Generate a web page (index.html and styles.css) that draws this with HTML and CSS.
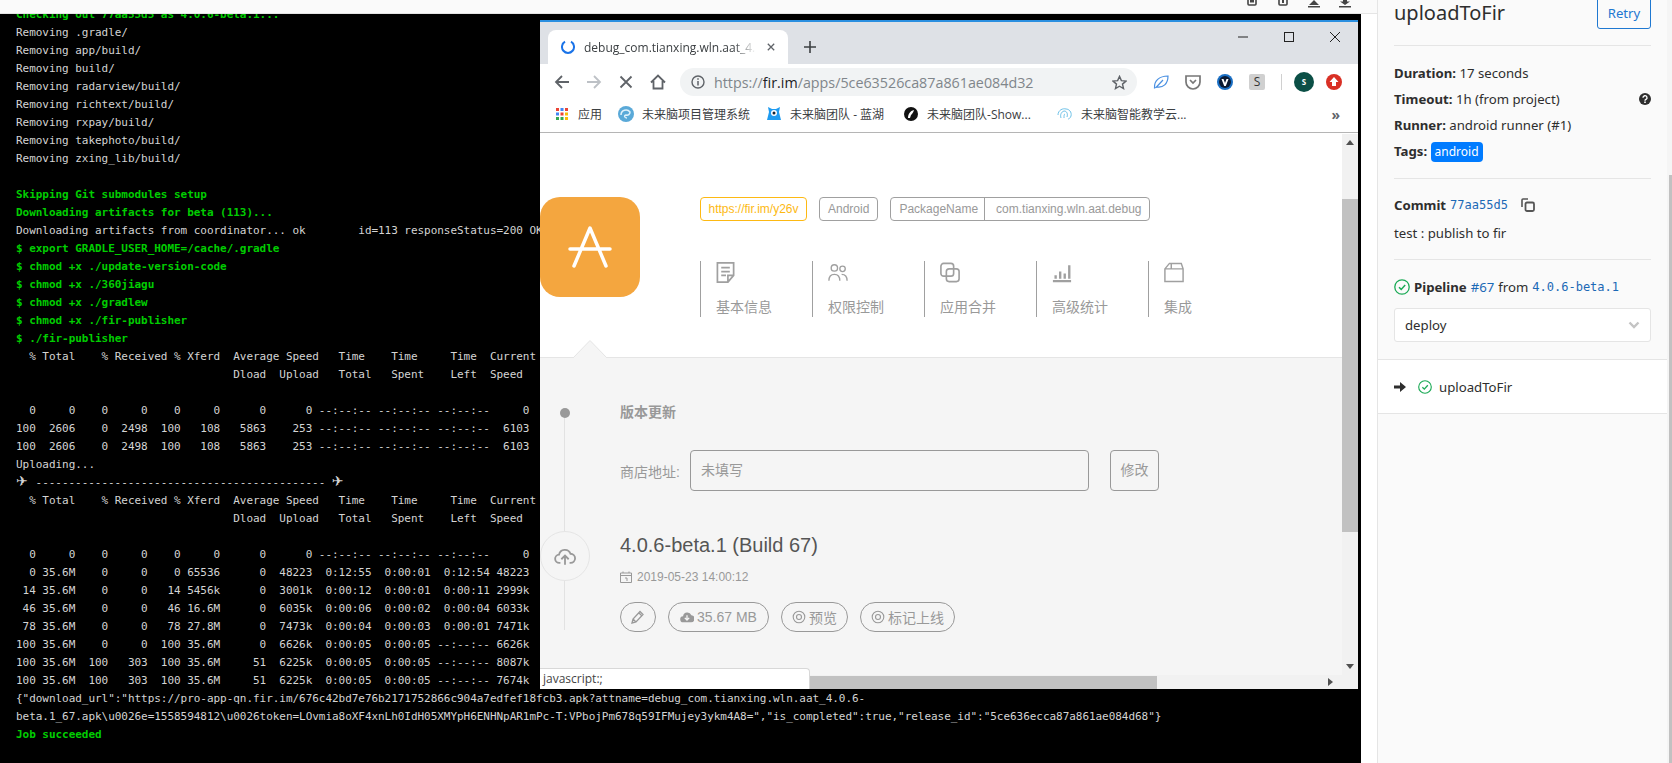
FILE: index.html
```html
<!DOCTYPE html>
<html lang="en">
<head>
  <meta charset="UTF-8">
  <meta name="viewport" content="width=device-width, initial-scale=1.0">
  <title>uploadToFir</title>
  <link rel="stylesheet" href="styles.css">
</head>
<body>
  <div class="main">
    <div class="job-bar">
      <svg class="bar-icon" viewBox="0 0 12 8"><path d="M2 0v4a1 1 0 0 0 1 1h6a1 1 0 0 0 1-1V0" fill="none" stroke="#444" stroke-width="1.6"/><rect x="4" y="0" width="4" height="2.5" fill="#444"/></svg>
      <svg class="bar-icon" viewBox="0 0 12 8"><path d="M2 0v4a1 1 0 0 0 1 1h6a1 1 0 0 0 1-1V0" fill="none" stroke="#444" stroke-width="1.6"/><rect x="5" y="0" width="2" height="3" fill="#444"/></svg>
      <svg class="bar-icon" viewBox="0 0 12 8"><path d="M6 0l5 5H1zM0 6h12v1.4H0z" fill="#444"/></svg>
      <svg class="bar-icon" viewBox="0 0 12 8"><path d="M4 0h4v1.5h3L6 5 1 1.500h3zM0 6h12v1.400H0z" fill="#444"/></svg>
    </div>
    <div class="terminal">
<pre class="log"><span class="g">Checking out 77aa55d5 as 4.0.6-beta.1...</span>
Removing .gradle/
Removing app/build/
Removing build/
Removing radarview/build/
Removing richtext/build/
Removing rxpay/build/
Removing takephoto/build/
Removing zxing_lib/build/

<span class="g">Skipping Git submodules setup</span>
<span class="g">Downloading artifacts for beta (113)...</span>
Downloading artifacts from coordinator... ok        id=113 responseStatus=200 OK
<span class="g">$ export GRADLE_USER_HOME=/cache/.gradle</span>
<span class="g">$ chmod +x ./update-version-code</span>
<span class="g">$ chmod +x ./360jiagu</span>
<span class="g">$ chmod +x ./gradlew</span>
<span class="g">$ chmod +x ./fir-publisher</span>
<span class="g">$ ./fir-publisher</span>
  % Total    % Received % Xferd  Average Speed   Time    Time     Time  Current
                                 Dload  Upload   Total   Spent    Left  Speed

  0     0    0     0    0     0      0      0 --:--:-- --:--:-- --:--:--     0
100  2606    0  2498  100   108   5863    253 --:--:-- --:--:-- --:--:--  6103
100  2606    0  2498  100   108   5863    253 --:--:-- --:--:-- --:--:--  6103
Uploading...
<span class="plane">✈</span> -------------------------------------------- <span class="plane">✈</span>
  % Total    % Received % Xferd  Average Speed   Time    Time     Time  Current
                                 Dload  Upload   Total   Spent    Left  Speed

  0     0    0     0    0     0      0      0 --:--:-- --:--:-- --:--:--     0
  0 35.6M    0     0    0 65536      0  48223  0:12:55  0:00:01  0:12:54 48223
 14 35.6M    0     0   14 5456k      0  3001k  0:00:12  0:00:01  0:00:11 2999k
 46 35.6M    0     0   46 16.6M      0  6035k  0:00:06  0:00:02  0:00:04 6033k
 78 35.6M    0     0   78 27.8M      0  7473k  0:00:04  0:00:03  0:00:01 7471k
100 35.6M    0     0  100 35.6M      0  6626k  0:00:05  0:00:05 --:--:-- 6626k
100 35.6M  100   303  100 35.6M     51  6225k  0:00:05  0:00:05 --:--:-- 8087k
100 35.6M  100   303  100 35.6M     51  6225k  0:00:05  0:00:05 --:--:-- 7674k
{"download_url":"https://pro-app-qn.fir.im/676c42bd7e76b2171752866c904a7edfef18fcb3.apk?attname=debug_com.tianxing.wln.aat_4.0.6-
beta.1_67.apk\u0026e=1558594812\u0026token=LOvmia8oXF4xnLh0IdH05XMYpH6ENHNpAR1mPc-T:VPbojPm678q59IFMujey3ykm4A8=","is_completed":true,"release_id":"5ce636ecca87a861ae084d68"}
<span class="g">Job succeeded</span></pre>
    </div>
  </div>

  <aside class="sidebar">
    <div class="side-scroll">
      <div class="side-body">
        <div class="side-head">
          <h2 class="job-name">uploadToFir</h2>
          <a class="retry">Retry</a>
        </div>
        <div class="side-block">
          <p class="info"><b>Duration:</b> 17 seconds</p>
          <p class="info info-help"><span><b>Timeout:</b> 1h (from project)</span>
            <svg class="help" viewBox="0 0 12 12"><circle cx="6" cy="6" r="6" fill="#2e2e2e"/><path d="M4 4.700a2 2 0 1 1 3 1.700c-.7.400-1 .7-1 1.300" fill="none" stroke="#fff" stroke-width="1.400"/><rect x="5.200" y="8.500" width="1.600" height="1.500" fill="#fff"/></svg>
          </p>
          <p class="info"><b>Runner:</b> android runner (#1)</p>
          <p class="info"><b>Tags:</b> <span class="tag">android</span></p>
        </div>
        <div class="side-block commit-block">
          <p class="commit"><b>Commit</b> <code class="sha">77aa55d5</code>
            <svg class="copy" viewBox="0 0 14 14"><path d="M1 9V2a1 1 0 0 1 1-1h5" fill="none" stroke="#555" stroke-width="1.600"/><rect x="4.500" y="4.500" width="8.500" height="8.500" rx="1.500" fill="none" stroke="#555" stroke-width="1.800"/></svg>
          </p>
          <p class="commit-msg">test : publish to fir</p>
        </div>
        <div class="pipeline-block">
          <p class="pipeline">
            <svg class="ok ok-big" viewBox="0 0 16 16"><circle cx="8" cy="8" r="7.200" fill="none" stroke="#1aaa55" stroke-width="1.300"/><path d="M5 8.300l2.200 2.100L11.200 6" fill="none" stroke="#1aaa55" stroke-width="1.500"/></svg>
            <b>Pipeline</b> <a class="link">#67</a> from <code class="sha">4.0.6-beta.1</code>
          </p>
          <div class="stage-select">deploy
            <svg class="caret" viewBox="0 0 12 8"><path d="M1.500 1.500L6 6l4.500-4.500" fill="none" stroke="#c4c4c4" stroke-width="2.400"/></svg>
          </div>
        </div>
      </div>
      <div class="job-row">
        <svg class="row-arrow" viewBox="0 0 12 10"><path d="M0 3.500h6V0l6 5-6 5V6.500H0z" fill="#2e2e2e"/></svg>
        <svg class="ok" viewBox="0 0 16 16"><circle cx="8" cy="8" r="7.200" fill="none" stroke="#1aaa55" stroke-width="1.300"/><path d="M5 8.300l2.200 2.100L11.200 6" fill="none" stroke="#1aaa55" stroke-width="1.500"/></svg>
        <span>uploadToFir</span>
      </div>
    </div>
    <div class="side-track"><div class="side-thumb"></div></div>
  </aside>

  <div class="window">
    <div class="tabstrip">
      <div class="tab">
        <svg class="spinner" viewBox="0 0 14 14"><path d="M4 1.700A6 6 0 1 0 10 1.700" fill="none" stroke="#1a73e8" stroke-width="2"/></svg>
        <span class="tab-title">debug_com.tianxing.wln.aat_4.</span>
        <svg class="tab-close" viewBox="0 0 10 10"><path d="M1 1l8 8M9 1l-8 8" stroke="#5f6368" stroke-width="1.600"/></svg>
      </div>
      <svg class="new-tab" viewBox="0 0 12 12"><path d="M6 0v12M0 6h12" stroke="#3c4043" stroke-width="1.600"/></svg>
      <div class="win-btns">
        <svg viewBox="0 0 12 12"><path d="M1 6h10" stroke="#222" stroke-width="1"/></svg>
        <svg viewBox="0 0 12 12"><rect x="1.500" y="1.500" width="9" height="9" fill="none" stroke="#222" stroke-width="1"/></svg>
        <svg viewBox="0 0 12 12"><path d="M1 1l10 10M11 1L1 11" stroke="#222" stroke-width="1"/></svg>
      </div>
    </div>

    <div class="toolbar">
      <svg class="nav-icon" viewBox="0 0 16 16"><path d="M15 8H2M8 2L2 8l6 6" fill="none" stroke="#5f6368" stroke-width="1.800"/></svg>
      <svg class="nav-icon" viewBox="0 0 16 16"><path d="M1 8h13M8 2l6 6-6 6" fill="none" stroke="#bdc1c6" stroke-width="1.800"/></svg>
      <svg class="nav-icon" viewBox="0 0 16 16"><path d="M2.500 2.500l11 11M13.500 2.500l-11 11" fill="none" stroke="#5f6368" stroke-width="1.800"/></svg>
      <svg class="nav-icon" viewBox="0 0 16 16"><path d="M1 8.500L8 1.500l7 7M3.500 7v7.500h9V7" fill="none" stroke="#5f6368" stroke-width="1.800"/></svg>
      <div class="omnibox">
        <svg class="omni-info" viewBox="0 0 14 14"><circle cx="7" cy="7" r="6" fill="none" stroke="#5f6368" stroke-width="1.400"/><path d="M7 6v4.500M7 3.300v1.500" stroke="#5f6368" stroke-width="1.500"/></svg>
        <span class="url">https://<em>fir.im</em>/apps/5ce63526ca87a861ae084d32</span>
        <svg class="omni-star" viewBox="0 0 16 16"><path d="M8 1.500l2 4.500 4.900.5-3.700 3.200 1.100 4.800L8 12l-4.300 2.500 1.100-4.800L1.100 6.500 6 6z" fill="none" stroke="#5f6368" stroke-width="1.500"/></svg>
      </div>
      <div class="ext-icons">
        <svg class="ext" viewBox="0 0 16 16"><path d="M1.500 14C1 7 6 2 15 2c0 8-5 12-11 11zM3 13.500L10 6" fill="none" stroke="#4a90e2" stroke-width="1.200"/></svg>
        <svg class="ext" viewBox="0 0 16 16"><path d="M1 2h14v6a7 7 0 0 1-14 0z" fill="none" stroke="#777" stroke-width="1.700"/><path d="M5 6l3 3 3-3" fill="none" stroke="#777" stroke-width="1.700"/></svg>
        <svg class="ext" viewBox="0 0 16 16"><circle cx="8" cy="8" r="8" fill="#1a6fc4"/><circle cx="8" cy="8" r="6" fill="#0a1a33"/><path d="M4.500 5h2L8 9l1.500-4h2L8.800 12H7.200z" fill="#fff"/></svg>
        <span class="ext-s">S</span>
        <span class="ext-sep"></span>
        <span class="avatar">S</span>
        <svg class="ext-red" viewBox="0 0 16 16"><circle cx="8" cy="8" r="8" fill="#d93025"/><path d="M8 3l4.500 5H10v4H6V8H3.500z" fill="#fff"/></svg>
      </div>
    </div>

    <div class="bookmarks">
      <svg class="apps" viewBox="0 0 12 12"><rect width="3" height="3" fill="#ea4335"/><rect x="4.500" width="3" height="3" fill="#4285f4"/><rect x="9" width="3" height="3" fill="#ea4335"/><rect y="4.500" width="3" height="3" fill="#4285f4"/><rect x="4.500" y="4.500" width="3" height="3" fill="#ea4335"/><rect x="9" y="4.500" width="3" height="3" fill="#fbbc05"/><rect y="9" width="3" height="3" fill="#34a853"/><rect x="4.500" y="9" width="3" height="3" fill="#34a853"/><rect x="9" y="9" width="3" height="3" fill="#fbbc05"/></svg>
      <span class="bm bm-apps">应用</span>
      <svg class="fav" viewBox="0 0 16 16"><circle cx="8" cy="8" r="8" fill="#5aa9d8"/><path d="M3 9a5 5 0 0 1 9-3 3 3 0 0 1-4 3c-2 0-2 3 1 3" fill="none" stroke="#dff1fb" stroke-width="1.500"/></svg>
      <span class="bm bm-a">未来脑项目管理系统</span>
      <svg class="fav" viewBox="0 0 16 16"><path d="M3 6l-1-5 4 2h4l4-2-1 5 2 8H1z" fill="#1e9bf0"/><circle cx="8" cy="7" r="3" fill="#fff"/><circle cx="8" cy="7" r="1.500" fill="#123"/></svg>
      <span class="bm bm-b">未来脑团队 - 蓝湖</span>
      <svg class="fav" viewBox="0 0 16 16"><circle cx="8" cy="8" r="7" fill="#111"/><path d="M5 12c0-4 2-7 6-8-1 3-2 4-3 5l-1 3z" fill="#fff"/></svg>
      <span class="bm bm-c">未来脑团队-Show...</span>
      <svg class="fav" viewBox="0 0 16 16"><path d="M1 9c0-5 5-7 8-6 3 0 6 3 5 7-1 3-3 3-3 3M4 12c-1-3 0-6 3-7 3 0 4 3 3 6M7 12c0-2 0-4 1-4" fill="none" stroke="#6fc2e8" stroke-width="1"/></svg>
      <span class="bm bm-d">未来脑智能教学云...</span>
      <span class="bm-more">»</span>
    </div>

    <div class="viewport">
      <div class="page-row">
        <div class="page">
          <div class="app-head">
            <div class="app-icon">
              <svg viewBox="0 0 100 100"><path d="M34 69L50 31l16 38M30 52h40" fill="none" stroke="#fff" stroke-width="3.500" stroke-linecap="round" stroke-linejoin="round"/></svg>
            </div>
            <div class="app-meta">
              <div class="badges">
                <span class="badge badge-link">https://fir.im/y26v</span>
                <span class="badge">Android</span>
                <span class="badge badge-pack"><span class="pack-k">PackageName</span><span class="pack-v">com.tianxing.wln.aat.debug</span></span>
              </div>
              <div class="app-nav">
                <div class="nav-item">
                  <svg viewBox="0 0 20 22"><path d="M1 1h17v13l-6 7H1zM5 6h9M5 10h9M5 14h5M12 21v-7h6" fill="none" stroke="#a0a0a0" stroke-width="1.800"/></svg>
                  <span>基本信息</span>
                </div>
                <div class="nav-item">
                  <svg viewBox="0 0 22 22"><circle cx="7" cy="6" r="3.500" fill="none" stroke="#a0a0a0" stroke-width="1.500"/><circle cx="16" cy="7" r="3" fill="none" stroke="#a0a0a0" stroke-width="1.500"/><path d="M1 20c0-5 3-7 6-7s6 2 6 7M15 13c3 0 6 2 6 7" fill="none" stroke="#a0a0a0" stroke-width="1.500"/></svg>
                  <span>权限控制</span>
                </div>
                <div class="nav-item">
                  <svg viewBox="0 0 22 22"><rect x="1" y="1" width="14" height="14" rx="3" fill="none" stroke="#a0a0a0" stroke-width="1.800"/><rect x="7" y="7" width="14" height="14" rx="3" fill="none" stroke="#a0a0a0" stroke-width="1.800"/></svg>
                  <span>应用合并</span>
                </div>
                <div class="nav-item">
                  <svg viewBox="0 0 22 22"><path d="M1 20.500h20M4 18v-4M9 18v-8M14 18v-6M19 18V3" fill="none" stroke="#a0a0a0" stroke-width="2.600"/></svg>
                  <span>高级统计</span>
                </div>
                <div class="nav-item">
                  <svg viewBox="0 0 22 22"><path d="M1 7l5-6h13l2 6v14H1zM1 7h20M8 1v6" fill="none" stroke="#a0a0a0" stroke-width="1.600"/></svg>
                  <span>集成</span>
                </div>
              </div>
            </div>
            <svg class="notch" viewBox="0 0 34 18"><path d="M0 18L17 .5 34 18" fill="#f5f5f5" stroke="#e5e5e5"/></svg>
          </div>

          <div class="releases">
            <div class="timeline">
              <span class="tl-dot"></span>
              <span class="tl-circle">
                <svg viewBox="0 0 24 20"><path d="M7 17H6a4.500 4.500 0 0 1-.5-9 6.500 6.500 0 0 1 12.500-1 5 5 0 0 1 0 10h-1M12 19v-9M8 13l4-4 4 4" fill="none" stroke="#999" stroke-width="2"/></svg>
              </span>
            </div>
            <div class="rel-body">
              <h4 class="rel-title">版本更新</h4>
              <div class="store">
                <label class="store-label">商店地址:</label>
                <div class="store-input">未填写</div>
                <div class="store-btn">修改</div>
              </div>
              <h3 class="version">4.0.6-beta.1 (Build 67)</h3>
              <p class="rel-date">
                <svg viewBox="0 0 12 12"><path d="M.5 2h11v9.500H.5zM.5 4.500h11M3 .5V2M9 .5V2M5 7h2v3" fill="none" stroke="#999" stroke-width="1"/></svg>
                2019-05-23 14:00:12
              </p>
              <div class="pills">
                <span class="pill pill-edit"><svg viewBox="0 0 14 14"><path d="M1 13l1-4 7-7.500 3 3L5 12zM2 9l3 3M8 3l3 3" fill="none" stroke="#999" stroke-width="1.300"/></svg></span>
                <span class="pill pill-size"><svg viewBox="0 0 16 14"><path d="M4 13a3.500 3.500 0 0 1-.5-7A5 5 0 0 1 13 5a4 4 0 0 1-1 8z" fill="#999"/><path d="M8 5v5M5.500 8L8 10.500 10.500 8" fill="none" stroke="#f5f5f5" stroke-width="1.500"/></svg>35.67 MB</span>
                <span class="pill pill-view"><svg viewBox="0 0 14 14"><circle cx="7" cy="7" r="5.800" fill="none" stroke="#999" stroke-width="1.100"/><circle cx="7" cy="7" r="2.500" fill="none" stroke="#999" stroke-width="1.100"/></svg>预览</span>
                <span class="pill pill-mark"><svg viewBox="0 0 14 14"><circle cx="7" cy="7" r="5.800" fill="none" stroke="#999" stroke-width="1.100"/><circle cx="7" cy="7" r="2.500" fill="none" stroke="#999" stroke-width="1.100"/></svg>标记上线</span>
              </div>
            </div>
          </div>
        </div>
        <div class="v-scroll">
          <svg class="sb-arrow" viewBox="0 0 8 5"><path d="M4 0l4 5H0z" fill="#505050"/></svg>
          <div class="v-track"><div class="v-thumb"></div></div>
          <svg class="sb-arrow" viewBox="0 0 8 5"><path d="M4 5L8 0H0z" fill="#505050"/></svg>
        </div>
      </div>
      <div class="h-scroll">
        <div class="h-track"><div class="h-thumb"></div></div>
        <svg class="sb-arrow-r" viewBox="0 0 5 8"><path d="M5 4L0 0v8z" fill="#505050"/></svg>
      </div>
      <div class="status-bubble">javascript:;</div>
    </div>
  </div>
</body>
</html>
```

FILE: styles.css
```css
html, body {
  height: 100%;
  margin: 0;
}
body {
  display: flex;
  overflow: hidden;
  background: #fff;
  font-family: "Liberation Sans", "Noto Sans CJK SC", sans-serif;
}
p, h2, h3, h4 {
  margin: 0;
  font-weight: normal;
}

/* job log */
.main {
  width: 1377px;
  display: flex;
  flex-direction: column;
  flex-shrink: 0;
}
.job-bar {
  height: 13px;
  background: #fafafa;
  border-bottom: 1px solid #e5e5e5;
  display: flex;
  justify-content: flex-end;
  align-items: flex-start;
  gap: 19px;
  padding-right: 26px;
  box-sizing: content-box;
}
.bar-icon {
  width: 12px;
  height: 8px;
}
.terminal {
  flex: 1;
  margin-right: 16px;
  background: #000;
  overflow: hidden;
}
.log {
  margin: -8px 0 0;
  padding: 0 0 0 16px;
  font-family: "DejaVu Sans Mono", monospace;
  font-size: 11px;
  letter-spacing: -0.04px;
  line-height: 18px;
  color: #d4d4d4;
}
.g {
  color: #00cd00;
  font-weight: bold;
}
.plane {
  display: inline-block;
  width: 13px;
  font-family: "DejaVu Sans", sans-serif;
  font-size: 14px;
  line-height: 0;
}

/* right sidebar */
.sidebar {
  flex: 1;
  display: flex;
  min-width: 0;
  background: #fafafa;
  border-left: 1px solid #e5e5e5;
  font-family: "Noto Sans", sans-serif;
  font-size: 13.200px;
  color: #2e2e2e;
  overflow: hidden;
}
.side-scroll {
  flex: 1;
  min-width: 0;
}
.side-body {
  padding: 0 16px;
}
.side-track {
  width: 3px;
  padding-left: 2px;
  background: #f5f5f5;
  padding-top: 175px;
}
.side-thumb {
  height: 588px;
  background: #c1c1c1;
}
.side-head {
  display: flex;
  justify-content: space-between;
  align-items: flex-end;
  height: 46px;
  padding-bottom: 18px;
  box-sizing: border-box;
  border-bottom: 1px solid #e5e5e5;
}
.job-name {
  font-size: 20px;
  line-height: 29px;
}
.retry {
  align-self: flex-start;
  margin-top: -7px;
  width: 54px;
  height: 36px;
  box-sizing: border-box;
  border: 1px solid #1f78d1;
  border-radius: 3px;
  color: #1f78d1;
  text-align: center;
  padding-top: 10px;
}
.side-block {
  padding: 14px 0;
  border-bottom: 1px solid #e5e5e5;
}
.info {
  line-height: 26px;
}
.info-help {
  display: flex;
  justify-content: space-between;
  align-items: center;
}
.help {
  width: 12px;
  height: 12px;
}
.tag {
  display: inline-block;
  background: #007bff;
  color: #fff;
  border-radius: 4px;
  padding: 0 4px;
  font-size: 12px;
  line-height: 20px;
}
.commit-block {
  padding: 13px 0;
}
.commit {
  line-height: 26px;
  display: flex;
  align-items: center;
  gap: 4px;
}
.sha {
  font-family: "DejaVu Sans Mono", monospace;
  font-size: 12px;
  color: #1b69b6;
}
.copy {
  width: 14px;
  height: 14px;
  margin-left: 9px;
}
.commit-msg {
  line-height: 26px;
  padding-top: 2px;
}
.pipeline-block {
  padding: 14px 0 17px;
}
.pipeline {
  display: flex;
  align-items: center;
  gap: 4px;
  line-height: 26px;
}
.link {
  color: #1b69b6;
}
.ok {
  width: 14px;
  height: 14px;
  flex-shrink: 0;
}
.ok-big {
  width: 16px;
  height: 16px;
}
.stage-select {
  margin-top: 8px;
  height: 34px;
  box-sizing: border-box;
  padding: 0 10px;
  display: flex;
  justify-content: space-between;
  align-items: center;
  background: #fff;
  border: 1px solid #e5e5e5;
  border-radius: 3px;
}
.caret {
  width: 12px;
  height: 8px;
}
.job-row {
  height: 55px;
  box-sizing: border-box;
  display: flex;
  align-items: center;
  padding-left: 16px;
  background: #fff;
  border-top: 1px solid #e5e5e5;
  border-bottom: 1px solid #e5e5e5;
}
.row-arrow {
  width: 12px;
  height: 10px;
  margin-right: 12px;
}
.job-row .ok {
  margin-right: 7px;
}

/* browser window on top of the log */
.window {
  position: absolute;
  left: 540px;
  top: 20px;
  width: 818px;
  height: 669px;
  display: flex;
  flex-direction: column;
  background: #fff;
  border-top: 2px solid #2b8fe0;
  box-sizing: border-box;
  font-family: "Open Sans", "Noto Sans CJK SC", sans-serif;
}
.tabstrip {
  height: 42px;
  flex-shrink: 0;
  background: #dee1e6;
  display: flex;
  align-items: flex-end;
  padding-left: 8px;
}
.tab {
  width: 240px;
  height: 34px;
  box-sizing: border-box;
  background: #fff;
  border-radius: 8px 8px 0 0;
  display: flex;
  align-items: center;
  padding: 0 0 0 13px;
}
.spinner {
  width: 14px;
  height: 14px;
  margin-right: 9px;
}
.tab-title {
  font-size: 12px;
  color: #3c4043;
  width: 172px;
  white-space: nowrap;
  overflow: hidden;
  mask-image: linear-gradient(to right, #000 150px, transparent 172px);
}
.tab-close {
  width: 8px;
  height: 8px;
  margin-left: 11px;
}
.new-tab {
  width: 12px;
  height: 12px;
  margin: 0 0 11px 16px;
}
.win-btns {
  margin-left: auto;
  align-self: flex-start;
  display: flex;
  gap: 34px;
  padding: 9px 17px 0 0;
}
.win-btns svg {
  width: 12px;
  height: 12px;
}
.toolbar {
  height: 36px;
  flex-shrink: 0;
  display: flex;
  align-items: center;
  padding-left: 14px;
  gap: 16px;
}
.nav-icon {
  width: 16px;
  height: 16px;
}
.omnibox {
  width: 457px;
  height: 28px;
  margin-left: -2px;
  border-radius: 14px;
  background: #f1f3f4;
  display: flex;
  align-items: center;
  padding: 0 10px 0 11px;
  box-sizing: border-box;
}
.omni-info {
  width: 14px;
  height: 14px;
  margin-right: 9px;
}
.url {
  font-size: 14.300px;
  color: #80868b;
  flex: 1;
  white-space: nowrap;
}
.url em {
  font-style: normal;
  color: #202124;
}
.omni-star {
  width: 15px;
  height: 15px;
}
.ext-icons {
  display: flex;
  align-items: center;
}
.ext {
  width: 16px;
  height: 16px;
  margin-right: 16px;
}
.ext-s {
  width: 16px;
  height: 16px;
  margin-right: 16px;
  border-radius: 2px;
  background: #d0d0d0;
  color: #333;
  font-size: 12px;
  line-height: 16px;
  text-align: center;
}
.ext-sep {
  width: 1px;
  height: 16px;
  background: #d0d0d0;
  margin-right: 12px;
}
.avatar {
  width: 20px;
  height: 20px;
  border-radius: 50%;
  background: #0b4f46;
  color: #fff;
  font-size: 8px;
  line-height: 20px;
  text-align: center;
  font-weight: bold;
  margin-right: 12px;
}
.ext-red {
  width: 16px;
  height: 16px;
}
.bookmarks {
  height: 33px;
  flex-shrink: 0;
  box-sizing: border-box;
  display: flex;
  align-items: center;
  padding: 0 18px 4px 16px;
  border-bottom: 1px solid #b5b5b5;
  font-size: 12px;
  color: #3c4043;
}
.apps {
  width: 12px;
  height: 12px;
  margin-right: 10px;
}
.fav {
  width: 16px;
  height: 16px;
  margin-right: 8px;
}
.bm {
  white-space: nowrap;
}
.bm-apps {
  margin-right: 16px;
}
.bm-a {
  width: 124px;
}
.bm-b {
  width: 113px;
}
.bm-c {
  width: 130px;
}
.bm-d {
  width: 106px;
}
.bm-more {
  margin-left: auto;
  font-size: 14px;
  font-weight: bold;
  color: #5f6368;
}

/* page inside the browser */
.viewport {
  flex: 1;
  min-height: 0;
  position: relative;
  display: flex;
  flex-direction: column;
  font-family: "Liberation Sans", "Noto Sans CJK SC", sans-serif;
  margin-top: 1px;
}
.page-row {
  flex: 1;
  min-height: 0;
  display: flex;
}
.page {
  flex: 1;
  min-width: 0;
  overflow: hidden;
  background: #f5f5f5;
}
.app-head {
  position: relative;
  height: 224px;
  box-sizing: border-box;
  display: flex;
  background: #fff;
  border-bottom: 1px solid #e5e5e5;
  padding-top: 63px;
}
.app-icon {
  width: 100px;
  height: 100px;
  border-radius: 20px;
  background: #f4a63f;
  margin-right: 60px;
}
.app-icon svg {
  display: block;
}
.badges {
  display: flex;
  gap: 12px;
  font-size: 12px;
}
.badge {
  height: 24px;
  box-sizing: border-box;
  border: 1px solid #a0a0a0;
  border-radius: 4px;
  padding: 0 8px;
  line-height: 22px;
  color: #999;
}
.badge-link {
  width: 107px;
  border-color: #fdb913;
  color: #fdb913;
  text-align: center;
  padding: 0;
}
.badge-pack {
  display: flex;
  padding: 0;
}
.pack-k {
  padding: 0 6px 0 8px;
  border-right: 1px solid #a0a0a0;
}
.pack-v {
  padding: 0 7px 0 11px;
}
.app-nav {
  display: flex;
  margin-top: 40px;
}
.nav-item {
  width: 112px;
  height: 56px;
  box-sizing: border-box;
  flex-shrink: 0;
  border-left: 1px solid #a0a0a0;
  padding-left: 15px;
  display: flex;
  flex-direction: column;
  justify-content: space-between;
  font-size: 14px;
  color: #999;
}
.nav-item svg {
  width: 20px;
  height: 21px;
  margin-top: 1px;
}
.nav-item span {
  line-height: 20px;
}
.notch {
  position: absolute;
  left: 33px;
  bottom: -1px;
  width: 34px;
  height: 18px;
}
.releases {
  display: flex;
  padding-top: 45px;
}
.timeline {
  position: relative;
  width: 80px;
  height: 227px;
  flex-shrink: 0;
}
.timeline::before {
  content: "";
  position: absolute;
  left: 24px;
  top: 10px;
  bottom: 0;
  width: 1px;
  background: #e2e2e2;
}
.tl-dot {
  position: absolute;
  left: 20px;
  top: 5px;
  width: 10px;
  height: 10px;
  border-radius: 50%;
  background: #999;
}
.tl-circle {
  position: absolute;
  left: 0;
  top: 128px;
  width: 48px;
  height: 48px;
  border: 1px solid #e5e5e5;
  border-radius: 50%;
  background: #f5f5f5;
  display: flex;
  align-items: center;
  justify-content: center;
}
.tl-circle svg {
  width: 22px;
  height: 19px;
}
.rel-title {
  margin-top: -1px;
  font-size: 14px;
  font-weight: bold;
  color: #999;
  line-height: 20px;
}
.store {
  display: flex;
  align-items: center;
  margin-top: 28px;
  font-size: 14px;
  color: #999;
}
.store-label {
  width: 70px;
}
.store-input {
  width: 399px;
  height: 41px;
  box-sizing: border-box;
  border: 1px solid #999;
  border-radius: 4px;
  padding-left: 10px;
  line-height: 39px;
}
.store-btn {
  width: 49px;
  height: 41px;
  box-sizing: border-box;
  margin-left: 21px;
  border: 1px solid #999;
  border-radius: 4px;
  text-align: center;
  line-height: 39px;
}
.version {
  margin-top: 40px;
  font-size: 20px;
  line-height: 28px;
  color: #555;
}
.rel-date {
  margin-top: 10px;
  display: flex;
  align-items: center;
  gap: 5px;
  font-size: 12px;
  line-height: 16px;
  color: #999;
}
.rel-date svg {
  width: 12px;
  height: 12px;
}
.pills {
  display: flex;
  gap: 12px;
  margin-top: 17px;
}
.pill {
  height: 30px;
  box-sizing: border-box;
  border: 1px solid #999;
  border-radius: 15px;
  display: flex;
  align-items: center;
  justify-content: center;
  gap: 3px;
  font-size: 14px;
  color: #999;
}
.pill svg {
  width: 14px;
  height: 14px;
}
.pill-edit {
  width: 36px;
}
.pill-size {
  width: 101px;
}
.pill-view {
  width: 67px;
}
.pill-mark {
  width: 95px;
}
.v-scroll {
  width: 16px;
  background: #f1f1f1;
  display: flex;
  flex-direction: column;
  align-items: center;
  flex-shrink: 0;
}
.sb-arrow {
  width: 8px;
  height: 5px;
  margin: 6px 0;
}
.v-track {
  flex: 1;
  width: 100%;
  padding-top: 48px;
}
.v-thumb {
  height: 333px;
  background: #c1c1c1;
}
.h-scroll {
  height: 14px;
  flex-shrink: 0;
  display: flex;
  align-items: center;
  background: #f1f1f1;
}
.h-track {
  flex: 1;
  height: 13px;
}
.h-thumb {
  width: 617px;
  height: 13px;
  background: #c1c1c1;
}
.sb-arrow-r {
  width: 5px;
  height: 8px;
  margin: 0 25px 0 5px;
}
.status-bubble {
  position: absolute;
  left: 0;
  bottom: 0;
  width: 270px;
  height: 21px;
  box-sizing: border-box;
  background: #fff;
  border: 1px solid #d8d8d8;
  border-width: 1px 1px 0 0;
  border-radius: 0 4px 0 0;
  padding-left: 3px;
  font-family: "Open Sans", sans-serif;
  font-size: 12px;
  line-height: 20px;
  color: #444;
}
```
